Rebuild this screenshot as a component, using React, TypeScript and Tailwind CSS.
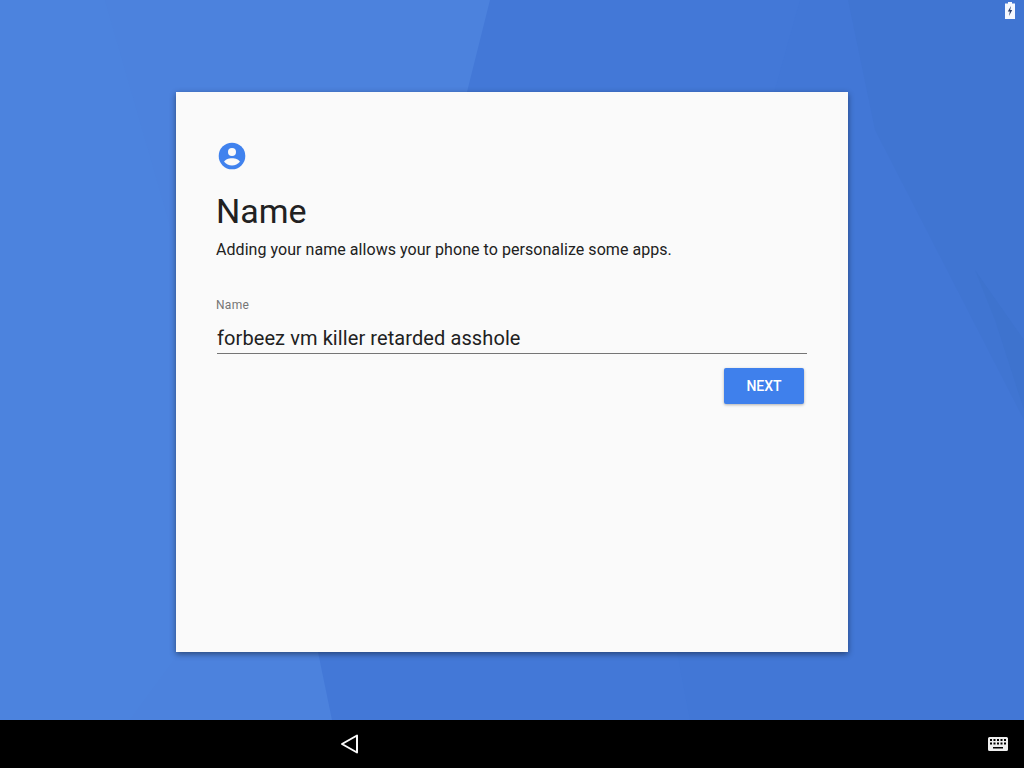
const roboto = { fontFamily: 'Roboto, "Liberation Sans", sans-serif' };

function Wallpaper() {
  return (
    <svg className="absolute inset-0 h-full w-full" viewBox="0 0 1024 720" preserveAspectRatio="none">
      <rect width="1024" height="720" fill="#4c82dd" />
      <polygon points="0,0 105,0 180,260 180,652 130,720 0,720" fill="#4c83de" />
      <polygon points="490,0 1024,0 1024,720 332,720 318,652 440,200" fill="#4378d7" />
      <polygon points="800,0 1024,0 1024,720 690,720 677,652 660,500" fill="#4277d6" />
      <polygon points="848,0 1024,0 1024,420 875,130" fill="#4075d2" />
      <polygon points="975,270 1024,340 1024,410 995,320" fill="#3e73ce" />
    </svg>
  );
}

export default function App() {
  return (
    <div className="flex h-[768px] w-[1024px] flex-col overflow-hidden bg-black" style={roboto}>
      <main className="relative flex h-[720px] items-start justify-center pt-[92px]">
        <Wallpaper />
        <svg className="absolute right-[8px] top-[2px]" width="12" height="17" viewBox="0 0 12 17">
          <path d="M4 0h4v1.500h3V17H1V1.500h3z" fill="#f5f8fe" />
          <path d="M7 4 3.800 9.500h2L5 14l3.200-6H6.200z" fill="#2c3f6b" />
        </svg>
        <section className="relative flex h-[560px] w-[672px] flex-col bg-[#fafafa] pl-[40px] pr-[41px] pt-[48px] shadow-[0_2px_6px_rgba(0,0,0,0.45)]">
          <svg width="32" height="32" viewBox="0 0 32 32" className="block">
            <circle cx="16" cy="16" r="13.300" fill="#4082ee" />
            <circle cx="16" cy="12" r="4" fill="#fafafa" />
            <path d="M16 18.200c-3.600 0-7.200 1.600-7.900 3.600 1.900 2.300 4.800 3.700 7.900 3.700s6-1.400 7.900-3.700c-.7-2-4.300-3.600-7.900-3.600z" fill="#fafafa" />
          </svg>
          <h1 className="mt-[16px] text-[34px] font-normal leading-[46px] text-[#212121]">Name</h1>
          <p className="mt-[4px] text-[16px] leading-[24px] tracking-[0.05px] text-[#212121]">Adding your name allows your phone to personalize some apps.</p>
          <label className="mt-[35px] text-[12px] leading-[16px] tracking-[0.3px] text-[#757575]">Name</label>
          <div className="ml-px mt-[11px] border-b border-[#757575] pb-px text-[20px] leading-[28px] tracking-[0.09px] text-[#212121]">
            forbeez vm killer retarded asshole
          </div>
          <div className="mt-[14px] flex justify-end pr-[3px]">
            <button className="h-[36px] w-[80px] rounded-[2px] bg-[#3f80ec] text-[14px] font-medium text-white shadow-[0_1px_3px_rgba(0,0,0,0.3)]">NEXT</button>
          </div>
        </section>
      </main>
      <nav className="relative flex h-[48px] items-center justify-between pl-[340px] pr-[16px]">
        <svg width="20" height="20" viewBox="0 0 20 20">
          <path d="M17 1.500v17L2 10z" fill="none" stroke="#fafafa" strokeWidth="2" strokeLinejoin="round" />
        </svg>
        <svg width="20" height="14" viewBox="0 0 20 14">
          <path fillRule="evenodd" fill="#eeeeee" d="M1.500 0h17A1.500 1.500 0 0 1 20 1.500v11a1.500 1.500 0 0 1-1.500 1.500h-17A1.500 1.500 0 0 1 0 12.500v-11A1.500 1.500 0 0 1 1.500 0zM2 2v2h2V2zm3.500 0v2h2V2zm3.500 0v2h2V2zm3.500 0v2h2V2zm3.500 0v2h2V2zM2 5.500v2h2v-2zm3.500 0v2h2v-2zm3.500 0v2h2v-2zm3.500 0v2h2v-2zm3.500 0v2h2v-2zM5 10v1.500h10V10z" />
        </svg>
      </nav>
    </div>
  );
}
